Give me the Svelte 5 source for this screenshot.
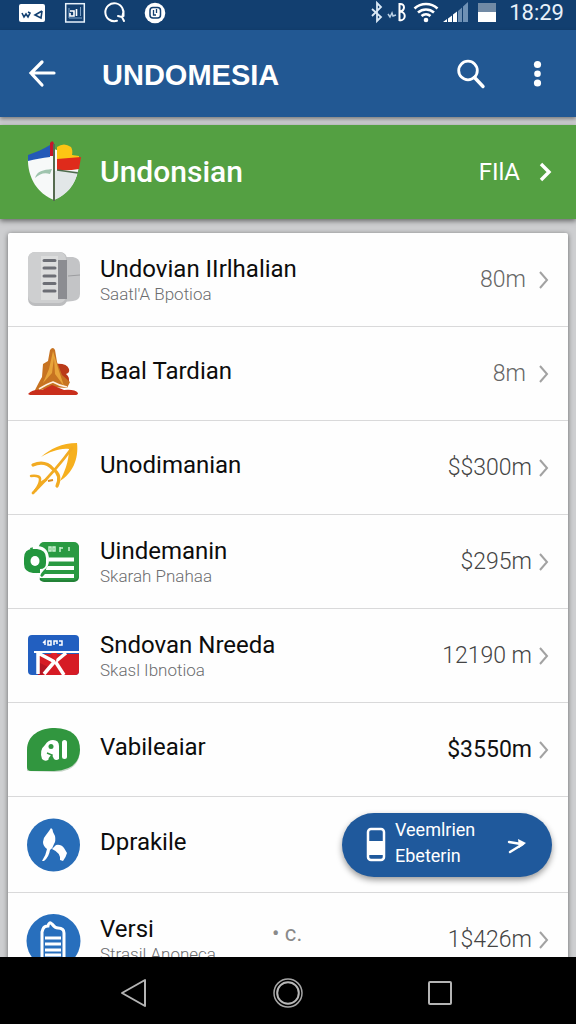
<script lang="ts">
  type Item = {
    icon: string;
    title: string;
    sub?: string;
    note?: string;
    value?: string;
    tone?: string;
    action?: string[];
  };

  const items: Item[] = [
    { icon: "server", title: "Undovian IIrlhalian", sub: "Saatl'A Bpotioa", value: "80m", tone: "muted" },
    { icon: "temple", title: "Baal Tardian", value: "8m", tone: "muted" },
    { icon: "rocket", title: "Unodimanian", value: "$$300m" },
    { icon: "card", title: "Uindemanin", sub: "Skarah Pnahaa", value: "$295m" },
    { icon: "flag", title: "Sndovan Nreeda", sub: "Skasl Ibnotioa", value: "12190 m" },
    { icon: "chat", title: "Vabileaiar", value: "$3550m", tone: "strong" },
    { icon: "leaf", title: "Dprakile", action: ["Veemlrien", "Ebeterin"] },
    { icon: "battery", title: "Versi", sub: "Strasil Anoneca", note: "• c.", value: "1$426m" },
  ];
</script>

<div class="screen">
  <div class="status">
    <div class="status-left">
      <svg width="28" height="22" viewBox="0 0 28 22">
        <rect x="1" y="3" width="26" height="18" rx="2" fill="#fff" />
        <path d="M4 12l2 4 2-3 2 3 2-4-2-1M24 10l-7 4 6 3 1-7" fill="none" stroke="#123f70" stroke-width="1.6" />
      </svg>
      <svg width="22" height="22" viewBox="0 0 22 22">
        <rect x="1.7" y="2.7" width="18.6" height="18.3" fill="none" stroke="#e8f2fb" stroke-width="1.5" />
        <path d="M5 7v10h13M16.500 6v9" fill="none" stroke="#7fa3c7" stroke-width="1" />
        <path d="M6 10h4v5H6v-3M12.500 8v7" fill="none" stroke="#fff" stroke-width="1.6" />
      </svg>
      <svg width="24" height="22" viewBox="0 0 24 22">
        <path d="M13 19.800A9 9 0 1 1 18.500 15M14 15l4 1 2 4M19.500 10v5" fill="none" stroke="#fff" stroke-width="2" stroke-linecap="round" />
      </svg>
      <svg width="22" height="22" viewBox="0 0 22 22">
        <circle cx="9" cy="12" r="10.300" fill="#fff" />
        <rect x="4" y="6.500" width="10.500" height="10.500" rx="3" fill="none" stroke="#123f70" stroke-width="1.500" />
        <path d="M7.500 9v5h2.500M10.500 8v4" fill="none" stroke="#123f70" stroke-width="1.300" />
      </svg>
    </div>
    <div class="status-right">
      <svg width="36" height="24" viewBox="0 0 36 24">
        <path d="M3 9l9 8-4 4V3l4 4-9 9" fill="none" stroke="#dbe9f6" stroke-width="1.800" />
        <path d="M19 14l2 3 2-4 1 3 3-1" fill="none" stroke="#b9cfe4" stroke-width="1.500" />
        <path d="M30.500 3v18M30.500 4c6-1 6 7 0 7.500 7 0 7 9 0 9" fill="none" stroke="#fff" stroke-width="2" />
      </svg>
      <svg width="26" height="22" viewBox="0 0 26 22">
        <path d="M1.500 7.500a17 17 0 0 1 23 0M5 11.500a12 12 0 0 1 16 0M8.500 15a7 7 0 0 1 9 0" fill="none" stroke="#fff" stroke-width="2.600" />
        <circle cx="13" cy="19" r="2.300" fill="#fff" />
      </svg>
      <svg class="signal" width="26" height="22" viewBox="0 0 26 22">
        <path d="M0 21l4-3v3zM5 17.500l4-3V21H5zM10 13.500l4-3V21h-4z" fill="#fff" />
        <path d="M15 10l4-3.500V21h-4zM20 5.500L25 1v20h-5z" fill="#6f91b5" />
      </svg>
      <svg width="20" height="22" viewBox="0 0 20 22">
        <rect x="1" y="2" width="18" height="10" fill="#718aa5" />
        <rect x="1" y="11" width="18" height="10" fill="#fff" />
      </svg>
      <span class="time">18:29</span>
    </div>
  </div>

  <header class="appbar">
    <button class="icon-button" aria-label="Back">
      <svg width="32" height="32" viewBox="0 0 32 32">
        <path d="M16 4L5 15l11 12M5 15h23" fill="none" stroke="#fff" stroke-width="3.200" stroke-linecap="round" />
      </svg>
    </button>
    <h1>UNDOMESIA</h1>
    <button class="icon-button" aria-label="Search">
      <svg width="32" height="32" viewBox="0 0 32 32">
        <circle cx="12" cy="12.500" r="9.300" fill="none" stroke="#fff" stroke-width="2.800" />
        <path d="M18.500 19.500l8.500 9" stroke="#fff" stroke-width="3.400" stroke-linecap="round" />
      </svg>
    </button>
    <button class="icon-button menu" aria-label="More options">
      <svg width="12" height="32" viewBox="0 0 12 32">
        <circle cx="5.500" cy="6.500" r="3.600" fill="#fff" />
        <circle cx="5.500" cy="15.700" r="3.300" fill="#fff" />
        <circle cx="5.500" cy="25" r="3.600" fill="#fff" />
      </svg>
    </button>
  </header>

  <button class="banner">
    <svg width="56" height="62" viewBox="0 0 56 62">
      <path d="M2 16L28 8l25 9c1 22-10 35-25 42C12 53 1 37 2 16z" fill="#f7f9f9" />
      <path d="M28 30h24c-3 14-11 24-24 29z" fill="#e2e7e8" />
      <path d="M2 20V14C10 11 18 8 24 4v12C16 17 9 18 2 20z" fill="#2459b8" />
      <path d="M24 2q3-4 4 1v12h-4z" fill="#c6162c" />
      <path d="M31 6q7-5 14 0 2 3 1 8l7 1v3H31z" fill="#fdc514" />
      <path d="M31 18l24-2-2 12q-11 2-22 1z" fill="#df2b1b" />
      <path d="M31 29l21 3" stroke="#4d6b4c" stroke-width="1.500" />
      <path d="M9 37c2-7 8-8 17-9l-2 5c-6-2-10 0-15 4z" fill="#9fc4ae" />
      <path d="M28 3v57" stroke="#566b50" stroke-width="2" />
    </svg>
    <span class="banner-title">Undonsian</span>
    <span class="banner-value">FIlA</span>
    <svg width="16" height="24" viewBox="0 0 16 24">
      <path d="M3 4l8 8-8 8" fill="none" stroke="#fff" stroke-width="3.400" />
    </svg>
  </button>

  <main>
    <ul class="list">
      {#each items as item (item.title)}
        <li>
          <button class="item">
            <svg width="56" height="56" viewBox="0 0 56 56">
              {#if item.icon === "server"}
                <path d="M38 5h9q7 1 7 8v29q0 6-7 7l-9 1z" fill="#c3c4c6" />
                <path d="M42 24l12-1" stroke="#9c9da0" />
                <rect x="2" y="0" width="39" height="54" rx="7" fill="#bcbdbf" />
                <rect x="2" y="0" width="38" height="51" rx="7" fill="#cecfd0" />
                <rect x="15" y="4" width="17" height="44" fill="#dcdddd" />
                <rect x="32" y="8" width="9" height="39" fill="#8b8c91" />
                <path d="M18 8.500h11M18 16h11M18 24h11M18 31.500h11M18 39h11" stroke="#6c6e75" stroke-width="3" stroke-linecap="round" />
              {:else if item.icon === "temple"}
                <path d="M29 18q12-1 14 5 1 4-3 5 5 4 2 9l-10 3z" fill="#ba3a19" />
                <path d="M24 4q3-4 5 0l2 12 5 13 8 7-3 6-15-1-18 5q5-10 8-15l1-13 5-3z" fill="#c77321" />
                <path d="M27 5l-4 18-6 14 9-10 2-15 1 16 9 12-5-15z" fill="#e8a43a" />
                <path d="M13 43q8-5 14-7 7 4 14 5" stroke="#fff0df" stroke-width="1.500" fill="none" />
                <path d="M2 48q5-5 14-4l10-5 12 5q11-1 14 3 0 2-3 2H4z" fill="#c92f1c" />
              {:else if item.icon === "rocket"}
                <path d="M51 3C36 3 24 9 15 17 24 12 33 8 43 9 43 22 38 33 34 41 46 34 53 19 51 3z" fill="#f6b01e" />
                <path d="M46 8Q30 30 7 53" fill="none" stroke="#f2ab22" stroke-width="2.800" stroke-linecap="round" />
                <path d="M7 25q12-5 20 4 9 6 4 17" fill="none" stroke="#f2ab22" stroke-width="3.200" stroke-linecap="round" />
                <path d="M5 36q10-1 9 4 0 4-5 11 6-10 11-11" fill="none" stroke="#f2ab22" stroke-width="2.500" stroke-linecap="round" />
                <path d="M22 41l5-1" fill="none" stroke="#d98a22" stroke-width="2" />
              {:else if item.icon === "card"}
                <rect x="13" y="9" width="40" height="39" rx="5" fill="#238237" />
                <rect x="13" y="8" width="40" height="38" rx="5" fill="#2a9a42" />
                <path d="M23 13v4h2v-4zM27 13h2v4h-2zM34 13v5M34 14h3M43 13v4" fill="none" stroke="#c9efcf" stroke-width="1.500" />
                <path d="M20 25.500h28M20 34h28M14 42h34" stroke="#fff" stroke-width="3.800" />
                <path d="M4 14q18-6 19 12 0 5-3 9 1 4-4 8l-7-5z" fill="#2a9a42" />
                <path d="M7 12h5q11 1 11 14 0 7-5 10-5 5-4 10l-4-7-5-1z" fill="#fff" />
                <path d="M7 15h4q9 1 9 9v5q0 6-6 6v4H7q-9-1-9-9v-6q0-9 9-9z" fill="#23963e" />
                <ellipse cx="9" cy="27" rx="4.500" ry="5" fill="#fff" />
              {:else if item.icon === "flag"}
                <rect x="2" y="7" width="51" height="40" rx="4" fill="#225fc0" />
                <path d="M12 26h41v17q0 4-4 4H12z" fill="#d61b25" />
                <path d="M12 34l10 5-6 8h-4z" fill="#b51522" />
                <path d="M8 24h45" stroke="#fff" stroke-width="2" />
                <path d="M12 24v22M12 25l17 9M40 25L29 34M29 33L18 46M29 33l9 14" fill="none" stroke="#fff" stroke-width="3.500" />
                <path d="M25 25h6l-1 9z" fill="#e0202c" />
                <path d="M17 15l2-2v4M22 13v4h3v-4zM28 17v-4h3v3M33 13h3v4h-3" fill="none" stroke="#fff" stroke-width="1.500" />
              {:else if item.icon === "chat"}
                <path d="M1 49V29C1 14 14 7 29 7q25 1 25 22-1 21-26 21z" fill="#c6d6c8" />
                <path d="M1 45V28C1 13 14 6 29 6q25 1 25 22-1 20-26 21H5q-4 0-4-4z" fill="#31963f" />
                <path d="M16 37q-3-9 3-14 3-5 8-5 6 0 6 6v13q-3 2-5 0l-2-4-4 5q-3 2-6-1z" fill="#fff" />
                <circle cx="25" cy="24.500" r="2.500" fill="#31963f" />
                <path d="M21 31l5 2-3 4" fill="none" stroke="#31963f" stroke-width="1.500" />
                <path d="M38.500 20.500v14" stroke="#fff" stroke-width="5" stroke-linecap="round" />
              {:else if item.icon === "leaf"}
                <circle cx="27.500" cy="28" r="26.500" fill="#286db8" />
                <path d="M25 11q2 1 2 4l2 4q1 5-1 8-1 4-4 6-1 7-6 11h-2q4-6 5-12-4-3-4-7 0-4 3-7l3-4z" fill="#fff" />
                <path d="M26 32l4-4q5-1 8 3l3 5q-1 4-4 8l-3-1q1-7-8-11z" fill="#fff" />
              {:else}
                <circle cx="27.500" cy="29" r="27" fill="#286fbd" />
                <path d="M17 17q1-3 5-3 1-5 4-2 3 4 6 4 6 0 6 5v24q0 4-4 4H20q-4 0-4-4V20z" fill="#286fbd" stroke="#fff" stroke-width="3" />
                <path d="M19 26h16M19 32h16M19 38h16M19 43h16" stroke="#fff" stroke-width="2.800" />
              {/if}
            </svg>
            <span class="text" class:single={!item.sub}>
              <span class="title">{item.title}</span>
              {#if item.sub}
                <span class="sub">{item.sub}</span>
              {/if}
            </span>
            {#if item.note}
              <span class="note">{item.note}</span>
            {/if}
            {#if item.value}
              <span class="value {item.tone ?? ''}">{item.value}</span>
              <svg width="12" height="20" viewBox="0 0 12 20">
                <path d="M2 2l7 8-7 8" fill="none" stroke="#a2a2a2" stroke-width="2" />
              </svg>
            {/if}
          </button>
          {#if item.action}
            <button class="pill">
              <svg width="20" height="36" viewBox="0 0 20 36">
                <rect x="2" y="2" width="16" height="31" rx="3" fill="none" stroke="#fff" stroke-width="2.500" />
                <path d="M3 14h14v14H3z" fill="#fff" />
              </svg>
              <span class="pill-text">
                {#each item.action as line}
                  <span>{line}</span>
                {/each}
              </span>
              <svg width="20" height="18" viewBox="0 0 20 18">
                <path d="M3 6l12 2M4 16L17 8" fill="none" stroke="#fff" stroke-width="2.400" stroke-linecap="round" />
                <path d="M12 3l8 4-7 5z" fill="#fff" />
              </svg>
            </button>
          {/if}
        </li>
      {/each}
    </ul>
  </main>

  <nav>
    <button aria-label="Back">
      <svg width="32" height="32" viewBox="0 0 32 32">
        <path d="M25 5v26L2 18z" fill="none" stroke="#b4b4b4" stroke-width="2" stroke-linejoin="round" />
      </svg>
    </button>
    <button aria-label="Home">
      <svg width="32" height="32" viewBox="0 0 32 32">
        <circle cx="16" cy="18" r="14" fill="none" stroke="#a6a6a6" stroke-width="1.500" />
        <circle cx="16" cy="18" r="10.800" fill="none" stroke="#b8b8b8" stroke-width="2" />
      </svg>
    </button>
    <button aria-label="Recent apps">
      <svg width="32" height="32" viewBox="0 0 32 32">
        <rect x="5" y="7" width="22" height="22" rx="1" fill="none" stroke="#b4b4b4" stroke-width="2" />
      </svg>
    </button>
  </nav>
</div>

<style>
  :global(body) {
    margin: 0;
  }

  .screen {
    display: flex;
    flex-direction: column;
    height: 100vh;
    background: #cdced0;
    font-family: Roboto, "Liberation Sans", sans-serif;
  }

  button {
    border: 0;
    padding: 0;
    background: none;
    color: inherit;
    font: inherit;
    text-align: left;
    cursor: pointer;
  }

  svg {
    display: block;
    flex: none;
    overflow: visible;
  }

  .status {
    display: flex;
    justify-content: space-between;
    height: 30px;
    padding: 0 12px 0 18px;
    background: #123f70;
    color: #e8f1fa;
  }

  .status-left,
  .status-right {
    display: flex;
    align-items: center;
    padding-bottom: 6px;
  }

  .status-left {
    gap: 18px;
  }

  .status-right {
    gap: 8px;
  }

  .signal {
    margin-left: -4px;
  }

  .time {
    padding: 2px 0 0 4px;
    font-size: 22px;
    line-height: 24px;
  }

  .appbar {
    display: flex;
    align-items: center;
    height: 87px;
    padding: 0 32px 0 26px;
    background: #225893;
    color: #fff;
    box-shadow: 0 2px 4px rgba(0, 0, 0, 0.4);
    z-index: 1;
  }

  h1 {
    flex: 1;
    margin: 2px 0 0 44px;
    font-family: "Liberation Sans", Roboto, sans-serif;
    font-size: 29px;
    line-height: 36px;
    font-weight: 700;
  }

  .menu {
    margin-left: 44px;
  }

  .banner {
    display: flex;
    align-items: center;
    height: 94px;
    margin-top: 8px;
    padding: 0 22px 0 26px;
    background: #54a042;
    color: #fff;
    box-shadow: 0 2px 5px rgba(0, 0, 0, 0.5);
  }

  .banner-title {
    flex: 1;
    margin-left: 18px;
    font-size: 30px;
    line-height: 36px;
    font-weight: 500;
  }

  .banner-value {
    margin-right: 18px;
    font-size: 24px;
    line-height: 32px;
  }

  main {
    flex: 1;
    min-height: 0;
    padding: 14px 8px 0;
    overflow: hidden;
  }

  .list {
    margin: 0;
    padding: 0;
    list-style: none;
    background: #fefefe;
    border-radius: 2px;
    box-shadow: 0 1px 5px rgba(0, 0, 0, 0.5);
  }

  li {
    display: flex;
    align-items: center;
    border-bottom: 1px solid #d9d9da;
  }

  .item {
    flex: 1;
    display: flex;
    align-items: center;
    min-width: 0;
    min-height: 93px;
    padding: 0 18px;
  }

  .text {
    display: flex;
    flex-direction: column;
    margin-left: 18px;
  }

  .single {
    padding-bottom: 6px;
  }

  .title {
    color: #0c0c0c;
    font-size: 24px;
    line-height: 28px;
  }

  .sub {
    color: #6c6d6f;
    font-size: 17px;
    line-height: 22px;
    font-weight: 300;
  }

  .note {
    margin: 0 0 12px 56px;
    color: #8a8a8a;
    font-size: 22px;
    line-height: 24px;
  }

  .value {
    margin: 0 6px 0 auto;
    color: #444;
    font-size: 23px;
    line-height: 28px;
    font-weight: 300;
  }

  .muted {
    margin-right: 12px;
    color: #666;
  }

  .strong {
    color: #111;
    font-weight: 400;
  }

  .pill {
    display: flex;
    align-items: center;
    min-width: 210px;
    height: 64px;
    box-sizing: border-box;
    margin: 16px 16px 15px 0;
    padding: 0 26px 0 24px;
    border-radius: 32px;
    background: #1f599c;
    color: #fff;
    box-shadow: 0 3px 6px rgba(0, 0, 0, 0.4);
  }

  .pill-text {
    flex: 1;
    display: flex;
    flex-direction: column;
    margin-left: 9px;
    padding-bottom: 4px;
    font-size: 18px;
    line-height: 26px;
  }

  nav {
    display: flex;
    justify-content: center;
    align-items: center;
    gap: 120px;
    height: 67px;
    background: #000;
    z-index: 1;
  }
</style>
